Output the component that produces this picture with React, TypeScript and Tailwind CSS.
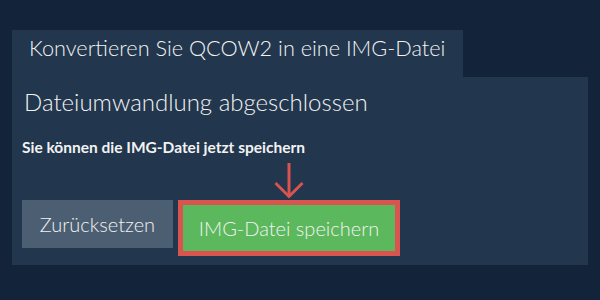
import React from 'react';

const font = { fontFamily: 'Lato, "Open Sans", sans-serif' };

const App: React.FC = () => {
  return (
    <div className="w-[600px] h-[300px] bg-[#12233a] pt-[30px] px-[12px] text-[#f2f2f2]" style={font}>
      <div className="w-[451px] h-[47px] bg-[#22374e] pl-[17px] pt-[6px] text-[21.7px] leading-[25px] font-light">
        Konvertieren Sie QCOW2 in eine IMG-Datei
      </div>
      <div className="h-[188px] bg-[#22374e] px-[10px] pt-[10px]">
        <h1 className="text-[24px] leading-[29px] font-light pl-[2px]">Dateiumwandlung abgeschlossen</h1>
        <p className="mt-[22px] text-[15.5px] leading-[19px] font-bold">Sie können die IMG-Datei jetzt speichern</p>
        <div className="flex items-start gap-[5px]">
          <button className="mt-[43px] w-[151px] h-[48px] bg-[#4c5e71] text-[20px] font-light flex items-center justify-center">
            Zurücksetzen
          </button>
          <div className="flex flex-col items-center">
            <svg width="30" height="43" viewBox="0 0 30 43" fill="none" stroke="#d9534f" strokeWidth="3">
              <line x1="15" y1="6" x2="15" y2="40" />
              <polyline points="1.5,26 15,39.5 28.5,26" />
            </svg>
            <button className="w-[222px] h-[56px] border-[5px] border-[#d9534f] bg-[#5cb85c] text-[20px] font-light flex items-center justify-center">
              IMG-Datei speichern
            </button>
          </div>
        </div>
      </div>
    </div>
  );
};

export default App;
